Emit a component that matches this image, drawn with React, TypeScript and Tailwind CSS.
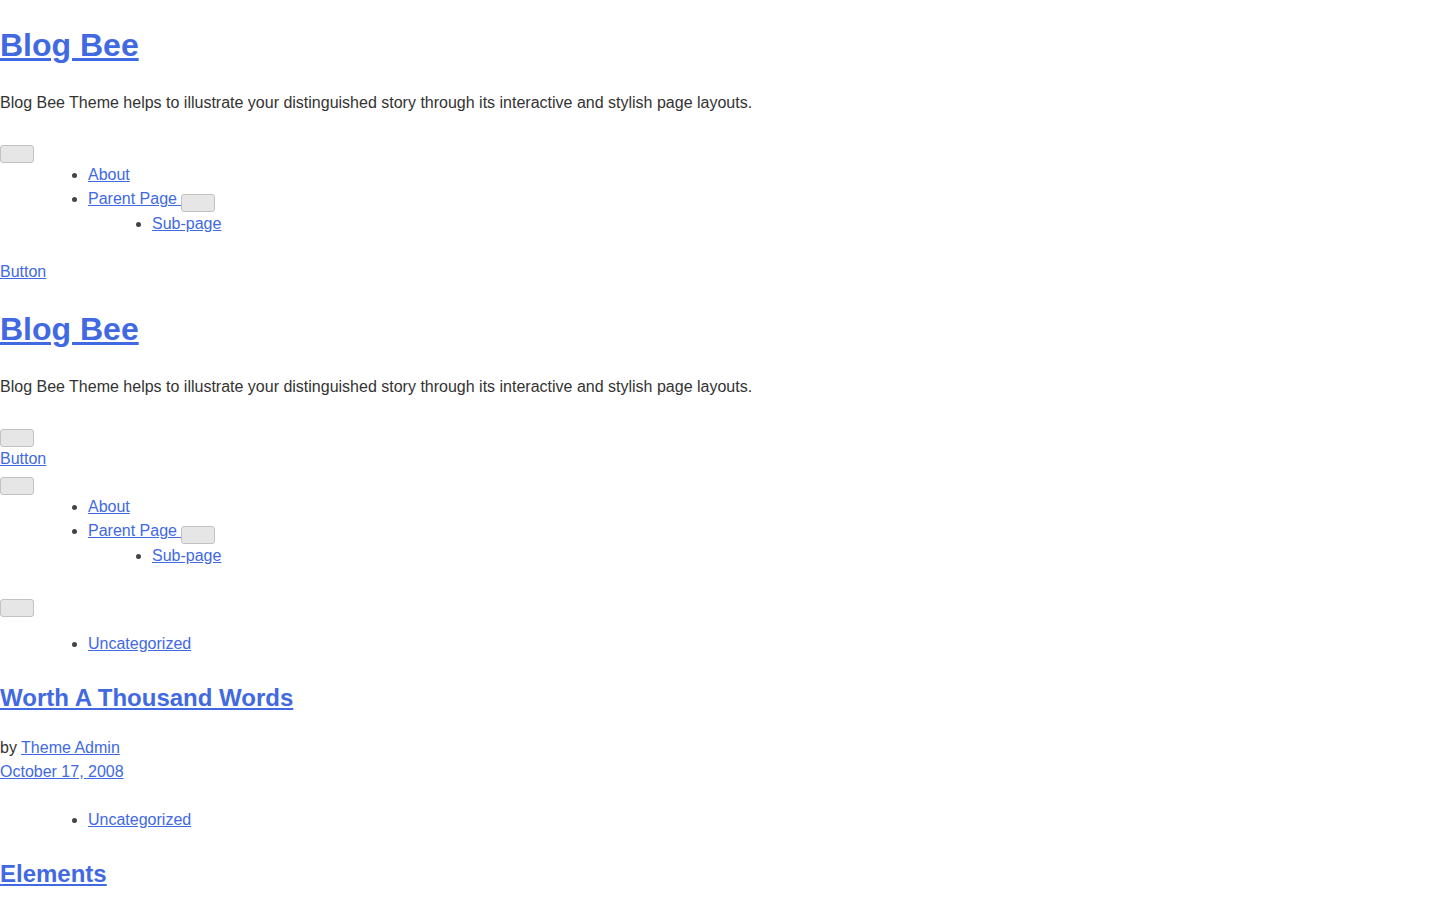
import React from "react";

const linkCls = "text-[#4169e1] underline";

function Toggle({ className = "" }: { className?: string }) {
  return (
    <button
      type="button"
      className={`w-[34px] h-[18px] bg-[#e6e6e6] border border-[#c2c2c2] rounded-[3px] ${className}`}
    />
  );
}

function NavList({ className = "" }: { className?: string }) {
  return (
    <ul className={`list-disc pl-[88px] marker:text-[#444] ${className}`}>
      <li>
        <a href="#" className={linkCls}>
          About
        </a>
      </li>
      <li>
        <a href="#" className={linkCls}>
          Parent Page{" "}
        </a>
        <Toggle className="inline-block align-[-7px]" />
        <ul className="list-disc pl-[64px]">
          <li>
            <a href="#" className={linkCls}>
              Sub-page
            </a>
          </li>
        </ul>
      </li>
    </ul>
  );
}

function SiteTitle({ top }: { top: string }) {
  return (
    <>
      <h1 className={`${top} text-[32px] leading-[48px] font-bold`}>
        <a href="#" className={linkCls}>
          Blog Bee
        </a>
      </h1>
      <p className="mt-[21.44px]">
        Blog Bee Theme helps to illustrate your distinguished story through its
        interactive and stylish page layouts.
      </p>
    </>
  );
}

export default function App() {
  return (
    <div className="min-h-[900px] bg-white text-[#333] text-base leading-6 font-['Liberation_Sans',Arial,sans-serif]">
      {/* first header */}
      <header>
        <SiteTitle top="pt-[21.44px]" />
        <div className="mt-[30px] h-[18px]">
          <Toggle className="block" />
        </div>
        <NavList />
        <div className="mt-6">
          <a href="#" className={linkCls}>
            Button
          </a>
        </div>
      </header>

      {/* second header */}
      <header>
        <SiteTitle top="mt-[21.44px]" />
        <div className="mt-[30.4px] h-[18px]">
          <Toggle className="block" />
        </div>
        <div>
          <a href="#" className={linkCls}>
            Button
          </a>
        </div>
        <div className="mt-[6px] h-[18px]">
          <Toggle className="block" />
        </div>
        <NavList className="-mt-[0.5px]" />
        <div className="mt-[31px] h-[18px]">
          <Toggle className="block" />
        </div>
      </header>

      <main>
        <article>
          <ul className="list-disc pl-[88px] mt-[15px] marker:text-[#444]">
            <li>
              <a href="#" className={linkCls}>
                Uncategorized
              </a>
            </li>
          </ul>
          <h2 className="mt-6 text-2xl leading-9 font-bold">
            <a href="#" className={linkCls}>
              Worth A Thousand Words
            </a>
          </h2>
          <div className="mt-5">
            <div>
              by{" "}
              <a href="#" className={linkCls}>
                Theme Admin
              </a>
            </div>
            <div>
              <a href="#" className={linkCls}>
                October 17, 2008
              </a>
            </div>
          </div>
        </article>
        <article>
          <ul className="list-disc pl-[88px] mt-6 marker:text-[#444]">
            <li>
              <a href="#" className={linkCls}>
                Uncategorized
              </a>
            </li>
          </ul>
          <h2 className="mt-6 text-2xl leading-9 font-bold">
            <a href="#" className={linkCls}>
              Elements
            </a>
          </h2>
        </article>
      </main>
    </div>
  );
}
